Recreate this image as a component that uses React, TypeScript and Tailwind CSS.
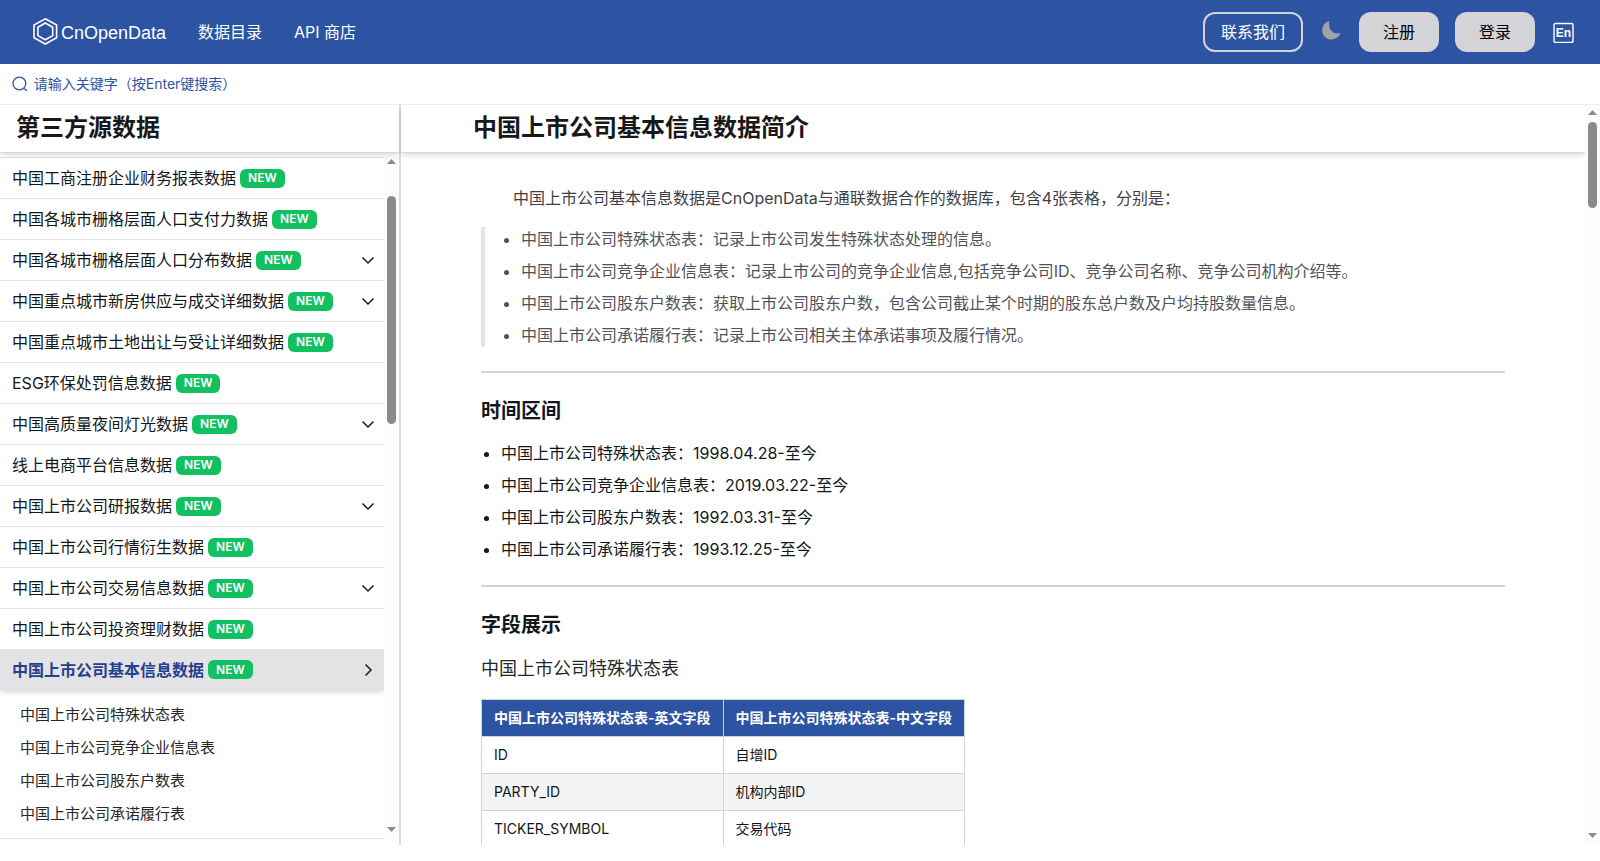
import React from 'react'

type Entry = {
  name: string
  expandable?: boolean
}

const entries: Entry[] = [
  { name: '中国工商注册企业财务报表数据' },
  { name: '中国各城市栅格层面人口支付力数据' },
  { name: '中国各城市栅格层面人口分布数据', expandable: true },
  { name: '中国重点城市新房供应与成交详细数据', expandable: true },
  { name: '中国重点城市土地出让与受让详细数据' },
  { name: 'ESG环保处罚信息数据' },
  { name: '中国高质量夜间灯光数据', expandable: true },
  { name: '线上电商平台信息数据' },
  { name: '中国上市公司研报数据', expandable: true },
  { name: '中国上市公司行情衍生数据' },
  { name: '中国上市公司交易信息数据', expandable: true },
  { name: '中国上市公司投资理财数据' },
]

const tables = [
  {
    name: '中国上市公司特殊状态表',
    desc: '记录上市公司发生特殊状态处理的信息。',
    from: '1998.04.28',
  },
  {
    name: '中国上市公司竞争企业信息表',
    desc: '记录上市公司的竞争企业信息,包括竞争公司ID、竞争公司名称、竞争公司机构介绍等。',
    from: '2019.03.22',
  },
  {
    name: '中国上市公司股东户数表',
    desc: '获取上市公司股东户数，包含公司截止某个时期的股东总户数及户均持股数量信息。',
    from: '1992.03.31',
  },
  {
    name: '中国上市公司承诺履行表',
    desc: '记录上市公司相关主体承诺事项及履行情况。',
    from: '1993.12.25',
  },
]

const fields = [
  ['ID', '自增ID'],
  ['PARTY_ID', '机构内部ID'],
  ['TICKER_SYMBOL', '交易代码'],
]

function Logo() {
  return (
    <a href="#" aria-label="CnOpenData">
      <svg width="136" height="32" viewBox="0 0 136 32" fill="none">
        <path d="M13.3 2.8 L24.6 9 V21.8 L13.3 28 L2 21.8 V9 Z" stroke="#fff" strokeWidth="1.6" />
        <path d="M13.3 7 L20.7 11.2 V19.6 L13.3 23.8 L5.9 19.6 V11.2 Z" stroke="#fff" strokeWidth="1.6" />
        <text x="29" y="23" fill="#fff" fontSize="18" fontFamily="'Liberation Sans', sans-serif">
          CnOpenData
        </text>
      </svg>
    </a>
  )
}

function Badge() {
  return (
    <span className="ml-1 flex h-[19px] items-center rounded-md bg-[#13c060] px-2 text-xs font-semibold text-white">
      NEW
    </span>
  )
}

function Chevron({ open }: { open?: boolean }) {
  return (
    <svg width="16" height="16" viewBox="0 0 16 16" fill="none" stroke="#181a1f" strokeWidth="1.5">
      <path d={open ? 'M5.5 2.5 L11 8 L5.5 13.5' : 'M2.5 5.5 L8 11 L13.5 5.5'} />
    </svg>
  )
}

function Arrow({ down }: { down?: boolean }) {
  return (
    <svg width="9" height="5" viewBox="0 0 9 5" fill="#8b8b8b">
      <path d={down ? 'M0 0 H9 L4.5 5 Z' : 'M0 5 H9 L4.5 0 Z'} />
    </svg>
  )
}

// Scroll track with its two arrows, children is the thumb
function ScrollTrack({ className, children }: { className: string; children: React.ReactNode }) {
  return (
    <div className={`flex w-[15px] shrink-0 flex-col items-center bg-[#fcfcfc] pb-[7px] ${className}`}>
      <Arrow />
      <div className="flex min-h-0 w-full flex-1 flex-col items-center">{children}</div>
      <Arrow down />
    </div>
  )
}

function Navbar() {
  return (
    <nav className="flex h-16 shrink-0 items-center bg-[#2d54a3] pr-[26px] pl-8 text-white">
      <Logo />
      <a href="#" className="ml-[30px]">数据目录</a>
      <a href="#" className="ml-8">API 商店</a>
      <div className="ml-auto flex items-center">
        <button className="h-10 rounded-xl border-2 border-[#d4d4d8] px-4">联系我们</button>
        <button className="mx-4 flex w-6 justify-center" aria-label="切换主题">
          <svg width="24" height="24" viewBox="0 0 24 24" fill="#a1a1aa">
            <path d="M10.4 1 A9.4 9.4 0 1 0 21.4 13 C17 14.2 14.4 12.8 12.4 10.8 C10.2 8.4 9.6 4.8 10.4 1 Z" />
          </svg>
        </button>
        <button className="h-10 rounded-xl bg-[#d4d4d8] px-6 text-black">注册</button>
        <button className="ml-4 h-10 rounded-xl bg-[#d4d4d8] px-6 text-black">登录</button>
        <button className="ml-[18px]" aria-label="English">
          <svg width="21" height="21" viewBox="0 0 21 21" fill="none">
            <rect x="1" y="1.5" width="19" height="19" rx="1.5" stroke="#fff" strokeWidth="1.4" />
            <text x="10.5" y="15" textAnchor="middle" fill="#fff" fontSize="12" fontWeight="700" fontFamily="'Liberation Sans', sans-serif">
              En
            </text>
          </svg>
        </button>
      </div>
    </nav>
  )
}

function SearchBar() {
  return (
    <div className="flex h-10 shrink-0 items-center pl-3">
      <svg width="16" height="16" viewBox="0 0 16 16" fill="none" stroke="#2d54a3" strokeWidth="1.3">
        <circle cx="7.5" cy="7.5" r="6.5" />
        <path d="M12.5 12.5 L15 15" />
      </svg>
      <input
        type="text"
        aria-label="搜索"
        placeholder="请输入关键字（按Enter键搜索）"
        className="ml-1.5 w-full text-sm outline-none placeholder:text-[#2d54a3]"
      />
    </div>
  )
}

function Sidebar() {
  return (
    <aside className="flex w-[401px] shrink-0 flex-col border-r-2 border-[#d9d9dc]">
      <h2 className="z-10 flex h-12 shrink-0 items-center border-b border-[#d9d9dc] pb-0.5 pl-4 text-2xl font-semibold text-[#18181b] shadow-md">
        第三方源数据
      </h2>
      <div className="mt-1 mb-1.5 flex min-h-0 flex-1">
        <div className="min-w-0 flex-1 overflow-hidden">
          <ul className="border-b border-[#e4e4e7]">
            {entries.map((e) => (
              <li key={e.name} className="border-t border-[#e4e4e7]">
                <a href="#" className="flex h-10 items-center pr-2 pl-3">
                  {e.name}
                  <Badge />
                  {e.expandable && (
                    <span className="ml-auto">
                      <Chevron />
                    </span>
                  )}
                </a>
              </li>
            ))}
            <li>
              <a href="#" className="flex h-[41px] items-center bg-[#e3e3e5] pr-2 pl-3 font-semibold text-[#24408e] shadow-md">
                中国上市公司基本信息数据
                <Badge />
                <span className="ml-auto">
                  <Chevron open />
                </span>
              </a>
              <ul className="pt-[9px] pb-[7px]">
                {tables.map((t) => (
                  <li key={t.name}>
                    <a href="#" className="flex h-[33px] items-center pl-5 text-[15px] text-[#27272a]">
                      {t.name}
                    </a>
                  </li>
                ))}
              </ul>
            </li>
          </ul>
        </div>
        <ScrollTrack className="pt-0.5">
          <div className="mt-8 h-[228px] w-[9px] rounded-full bg-[#8b8b8b]" />
        </ScrollTrack>
      </div>
    </aside>
  )
}

function Content() {
  return (
    <main className="flex min-w-0 flex-1 flex-col">
      <h1 className="flex h-12 shrink-0 items-center border-b border-[#d9d9dc] pb-0.5 pl-[72px] text-2xl font-semibold text-[#18181b] shadow-md">
        中国上市公司基本信息数据简介
      </h1>
      <div className="min-h-0 flex-1 overflow-hidden px-20 pt-[33px]">
        <p className="indent-8 text-[#3f3f46]">
          中国上市公司基本信息数据是CnOpenData与通联数据合作的数据库，包含4张表格，分别是：
        </p>
        <blockquote className="mt-[17px] border-l-4 border-[#e4e4e7] pl-4 text-[#52525b]">
          <ul className="flex list-disc flex-col gap-2 pl-5">
            {tables.map((t) => (
              <li key={t.name}>
                {t.name}：{t.desc}
              </li>
            ))}
          </ul>
        </blockquote>
        <hr className="mt-6 border-t-2 border-[#d4d4d8]" />
        <h2 className="mt-6 text-xl font-semibold">时间区间</h2>
        <ul className="mt-4 flex list-disc flex-col gap-2 pl-5">
          {tables.map((t) => (
            <li key={t.name}>
              {t.name}：{t.from}-至今
            </li>
          ))}
        </ul>
        <hr className="mt-6 border-t-2 border-[#d4d4d8]" />
        <h2 className="mt-6 text-xl font-semibold">字段展示</h2>
        <h3 className="mt-4 text-lg text-[#27272a]">中国上市公司特殊状态表</h3>
        <table className="mt-4 border-collapse text-sm">
          <thead>
            <tr className="h-[37px] bg-[#2d54a3] text-left text-white">
              <th className="border border-[#d1d3da] px-3 font-semibold">中国上市公司特殊状态表-英文字段</th>
              <th className="border border-[#d1d3da] px-3 font-semibold">中国上市公司特殊状态表-中文字段</th>
            </tr>
          </thead>
          <tbody>
            {fields.map(([en, zh]) => (
              <tr key={en} className="h-[37px] even:bg-[#f3f4f6]">
                <td className="border border-[#d1d3da] px-3">{en}</td>
                <td className="border border-[#d1d3da] px-3">{zh}</td>
              </tr>
            ))}
          </tbody>
        </table>
      </div>
    </main>
  )
}

export default function App() {
  return (
    <div className="flex h-screen flex-col bg-white pb-4 font-[Inter,'Noto_Sans_CJK_SC',sans-serif] text-base text-[#11181c]">
      <Navbar />
      <SearchBar />
      <div className="flex min-h-0 flex-1 border-t border-[#ececee]">
        <Sidebar />
        <Content />
        <ScrollTrack className="pt-[5px]">
          <div className="mt-[7px] h-[86px] w-[9px] rounded-full bg-[#8b8b8b]" />
        </ScrollTrack>
      </div>
    </div>
  )
}
